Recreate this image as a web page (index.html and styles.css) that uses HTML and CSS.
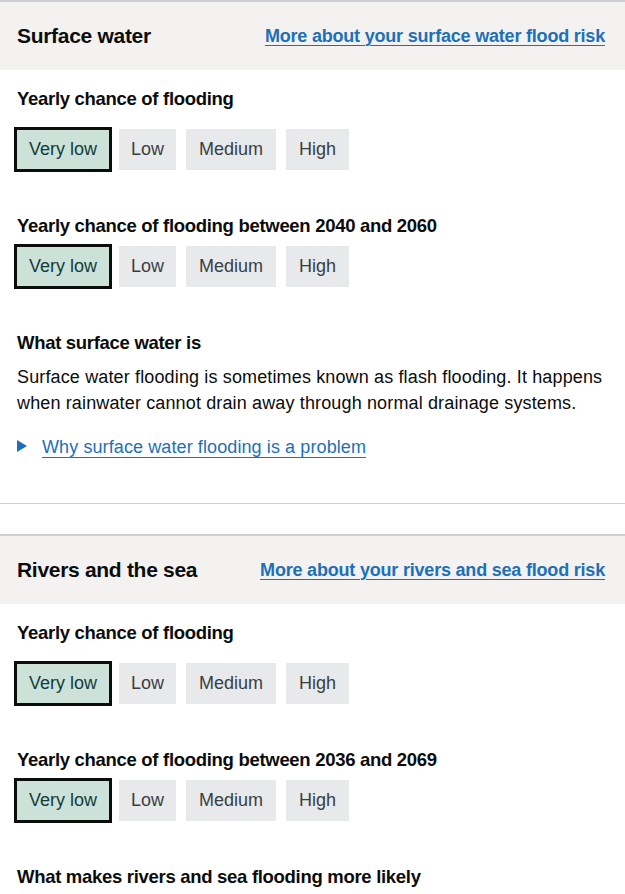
FILE: index.html
```html
<!DOCTYPE html>
<html lang="en">
<head>
  <meta charset="UTF-8">
  <meta name="viewport" content="width=device-width, initial-scale=1.0">
  <title>Your flood risk</title>
  <link rel="stylesheet" href="styles.css">
</head>
<body>

  <section class="risk">
    <div class="risk-header">
      <h2>Surface water</h2>
      <a href="#">More about your surface water flood risk</a>
    </div>
    <div class="risk-body">
      <h3 class="first">Yearly chance of flooding</h3>
      <ul class="scale">
        <li class="current">Very low</li>
        <li>Low</li>
        <li>Medium</li>
        <li>High</li>
      </ul>

      <h3 class="future">Yearly chance of flooding between 2040 and 2060</h3>
      <ul class="scale tight">
        <li class="current">Very low</li>
        <li>Low</li>
        <li>Medium</li>
        <li>High</li>
      </ul>

      <h3 class="future">What surface water is</h3>
      <p>Surface water flooding is sometimes known as flash flooding. It happens when rainwater cannot drain away through normal drainage systems.</p>

      <details>
        <summary><span class="summary-text">Why surface water flooding is a problem</span></summary>
      </details>
    </div>
  </section>

  <section class="risk">
    <div class="risk-header">
      <h2>Rivers and the sea</h2>
      <a href="#">More about your rivers and sea flood risk</a>
    </div>
    <div class="risk-body">
      <h3 class="first">Yearly chance of flooding</h3>
      <ul class="scale">
        <li class="current">Very low</li>
        <li>Low</li>
        <li>Medium</li>
        <li>High</li>
      </ul>

      <h3 class="future">Yearly chance of flooding between 2036 and 2069</h3>
      <ul class="scale tight">
        <li class="current">Very low</li>
        <li>Low</li>
        <li>Medium</li>
        <li>High</li>
      </ul>

      <h3 class="future">What makes rivers and sea flooding more likely</h3>
    </div>
  </section>

</body>
</html>
```

FILE: styles.css
```css
* {
  margin: 0;
  padding: 0;
  box-sizing: border-box;
}

body {
  font-family: "Liberation Sans", Arial, sans-serif;
  color: #0b0c0c;
  background-color: #ffffff;
}

a {
  color: #1d70b8;
  text-decoration: underline;
  text-decoration-thickness: 1px;
  text-underline-offset: 3px;
}

.risk {
  border-bottom: 1px solid #cecfd0;
  padding-bottom: 43px;
  margin-bottom: 30px;
}

.risk:last-child {
  border-bottom: none;
}

.risk-header {
  display: flex;
  justify-content: space-between;
  align-items: center;
  height: 70px;
  padding: 0 20px 0 17px;
  background-color: #f3f2f1;
  border-top: 2px solid #cecfd0;
}

.risk-header h2 {
  font-size: 21px;
  font-weight: 700;
  letter-spacing: -0.3px;
}

.risk-header a {
  font-size: 18px;
  font-weight: 700;
  letter-spacing: -0.2px;
}

.risk-body {
  padding: 0 17px;
}

h3 {
  font-size: 18.5px;
  font-weight: 700;
  line-height: 25px;
  letter-spacing: -0.3px;
}

h3.first {
  margin-top: 16px;
}

h3.future {
  margin-top: 43px;
}

/* likelihood scale, current band is outlined */
.scale {
  list-style: none;
  display: flex;
  gap: 10px;
  margin-top: 18px;
}

.scale.tight {
  margin-top: 8px;
}

.scale li {
  height: 41px;
  line-height: 41px;
  padding: 0 13px;
  font-size: 18px;
  color: #383f43;
  background-color: #e8e9ea;
}

.scale li:nth-child(2) {
  padding: 0 12px;
}

.scale li.current {
  padding: 0 13px;
  color: #133b3b;
  background-color: #cce2d8;
  outline: 3px solid #0b0c0c;
  outline-offset: -1px;
  margin-left: -1px;
  margin-right: -1px;
}

p {
  margin-top: 9px;
  font-size: 18px;
  line-height: 26px;
  letter-spacing: 0.14px;
}

details {
  margin-top: 18px;
  font-size: 18px;
  line-height: 26px;
}

summary {
  list-style: none;
  color: #1d70b8;
  cursor: pointer;
}

summary::-webkit-details-marker {
  display: none;
}

summary::before {
  content: "";
  display: inline-block;
  width: 0;
  height: 0;
  margin-right: 15px;
  border-style: solid;
  border-width: 6px 0 6px 10px;
  border-color: transparent transparent transparent #1d70b8;
  vertical-align: 1px;
}

.summary-text {
  text-decoration: underline;
  text-decoration-thickness: 1px;
  text-underline-offset: 4px;
  letter-spacing: 0.1px;
}
```
